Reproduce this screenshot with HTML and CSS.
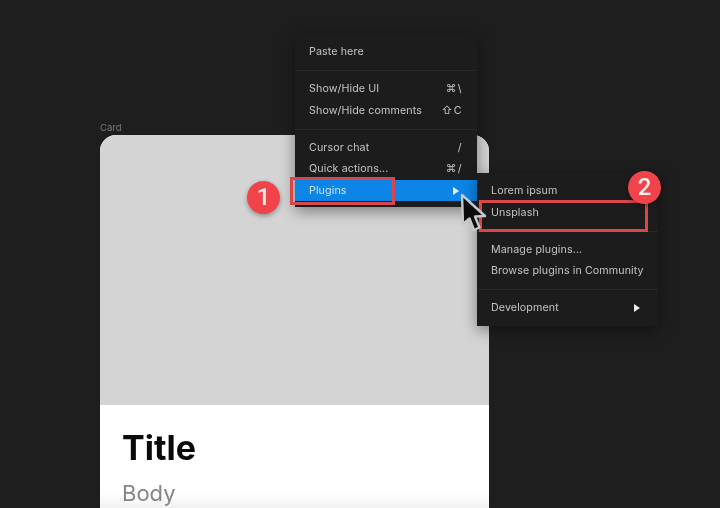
FILE: index.html
```html
<!DOCTYPE html>
<html lang="en">
<head>
<meta charset="utf-8">
<title>Plugins menu</title>
<link rel="stylesheet" href="styles.css">
</head>
<body>
<main class="canvas">
  <div class="frame-label">Card</div>
  <article class="card">
    <div class="card-image"></div>
    <div class="card-body">
      <h1 class="card-title">Title</h1>
      <p class="card-text">Body</p>
    </div>
  </article>

  <nav class="menu menu-main">
    <div class="item">Paste here</div>
    <hr class="sep">
    <div class="item"><span>Show/Hide UI</span><span class="key">⌘\</span></div>
    <div class="item"><span>Show/Hide comments</span><span class="key">⇧C</span></div>
    <hr class="sep">
    <div class="item"><span>Cursor chat</span><span class="key">/</span></div>
    <div class="item"><span>Quick actions...</span><span class="key">⌘/</span></div>
    <div class="item active"><span>Plugins</span><span class="arrow"></span></div>
  </nav>

  <nav class="menu menu-sub">
    <div class="item">Lorem ipsum</div>
    <div class="item">Unsplash</div>
    <hr class="sep">
    <div class="item">Manage plugins...</div>
    <div class="item">Browse plugins in Community</div>
    <hr class="sep">
    <div class="item"><span>Development</span><span class="arrow"></span></div>
  </nav>

  <div class="highlight highlight-one"></div>
  <div class="highlight highlight-two"></div>
  <div class="badge badge-one">1</div>
  <div class="badge badge-two">2</div>

  <svg class="cursor" viewBox="0 0 30 42" width="30" height="42" aria-hidden="true">
    <path d="M3 2 L4 31 L10.5 25.5 L15 37 L20.5 34.5 L16 23.5 L26 23 Z" fill="#0b0b0b" stroke="#c4c8cb" stroke-width="2.4" stroke-linejoin="round"/>
  </svg>
</main>
</body>
</html>
```
FILE: styles.css
```css
* { box-sizing: border-box; }

html, body {
  margin: 0;
  height: 100%;
  overflow: hidden;
  background: #1e1e1e;
}

.canvas {
  position: relative;
  width: 720px;
  height: 508px;
  overflow: hidden;
  background: #1e1e1e;
  font-family: Inter, "Liberation Sans", sans-serif;
  filter: blur(0.35px);
}

.frame-label {
  position: absolute;
  left: 100px;
  top: 122px;
  font-size: 9.5px;
  line-height: 12px;
  color: #7a7a7a;
}

.card {
  position: absolute;
  left: 100px;
  top: 135px;
  width: 389px;
  height: 373px;
  overflow: hidden;
  border-radius: 16px 16px 0 0;
  background: linear-gradient(to bottom, #fff 96%, #f1f1f1 100%);
}

.card-image {
  height: 270px;
  background: #d4d4d4;
}

.card-body {
  padding: 25px 22px 0;
}

.card-title {
  margin: 0;
  font-size: 34px;
  line-height: 36px;
  font-weight: 700;
  color: #0a0a0a;
}

.card-text {
  margin: 14px 0 0;
  font-size: 22px;
  line-height: 26px;
  color: #858585;
}

.menu {
  position: absolute;
  background: #1c1c1d;
  color: #c4c4c4;
  font-size: 10.7px;
  letter-spacing: 0.1px;
  white-space: nowrap;
  box-shadow: 0 4px 14px rgba(0, 0, 0, 0.42);
}

.menu-main {
  left: 295px;
  top: 34px;
  width: 182px;
  height: 173px;
  padding: 7px 0 0;
}

.menu-sub {
  left: 477px;
  top: 173px;
  width: 181px;
  height: 153px;
  padding: 7px 0 0;
}

.item {
  display: flex;
  align-items: center;
  justify-content: space-between;
  height: 21.6px;
  padding: 0 14px;
}

.item.active {
  background: #0c85e6;
  color: #cfe4f6;
}

.key {
  letter-spacing: 1.4px;
  color: #c4c4c4;
}

.arrow {
  width: 0;
  height: 0;
  margin-right: 4px;
  border-left: 6px solid #e6eef5;
  border-top: 4px solid transparent;
  border-bottom: 4px solid transparent;
}

.sep {
  height: 1px;
  margin: 7.4px 0 7px;
  border: 0;
  background: #282829;
}

.highlight {
  position: absolute;
  border: 3px solid #d9474b;
}

.highlight-one {
  left: 290px;
  top: 177px;
  width: 105px;
  height: 28px;
}

.highlight-two {
  left: 479px;
  top: 200px;
  width: 169px;
  height: 32px;
}

.badge {
  position: absolute;
  width: 33px;
  height: 33px;
  border-radius: 50%;
  background: #f0444a;
  color: #fbeeee;
  font-family: Roboto, "Liberation Sans", sans-serif;
  font-size: 24px;
  font-weight: 500;
  line-height: 33px;
  text-align: center;
  box-shadow: 0 2px 5px rgba(0, 0, 0, 0.35);
}

.badge-one {
  left: 247px;
  top: 181px;
}

.badge-two {
  left: 628px;
  top: 171px;
}

.cursor {
  position: absolute;
  left: 459px;
  top: 193px;
}
```
